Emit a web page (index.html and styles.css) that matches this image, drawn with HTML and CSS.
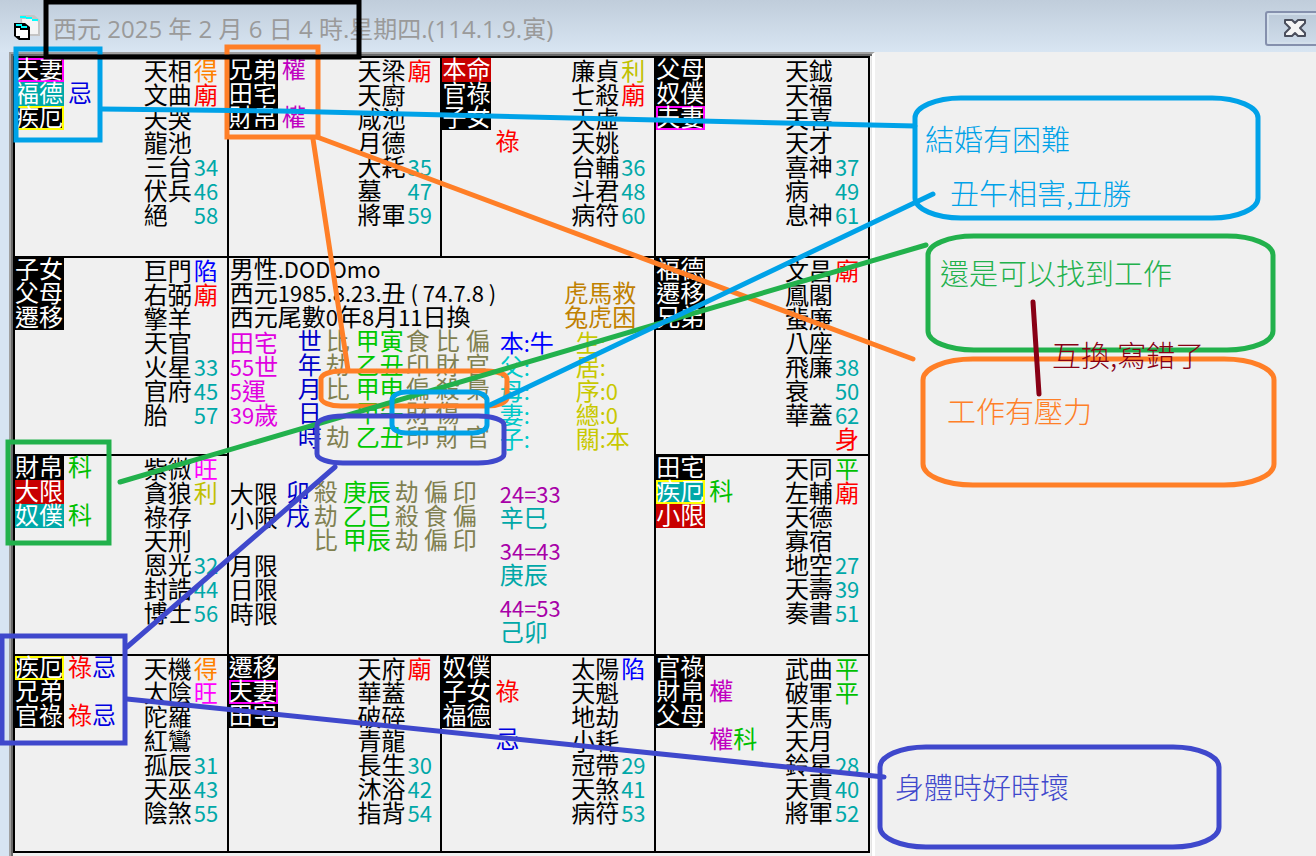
FILE: index.html
```
<!DOCTYPE html>
<html lang="zh-Hant">
<head>
    <meta charset="UTF-8">
    <meta name="viewport" content="width=device-width, initial-scale=1.0">
    <title>紫微斗數命盤</title>
    <link rel="stylesheet" href="styles.css">
</head>
<body>
    <header class="titlebar">
        <svg class="app-icon" width="28" height="28" viewBox="0 0 28 28">
            <path d="M6 0h14l6 5v16H8z" fill="#c4c4c4"/>
            <path d="M8 4h14l2 3v12H9z" fill="#f4f4f4"/>
            <path d="M6 2h6M12 3h6M18 5h6" stroke="#00ffff" stroke-width="2"/>
            <path d="M0 8h11l5 4v13H5l-5-4z" fill="#000"/>
            <path d="M2 13h4v2h8v8H6v-2H2z" fill="#fff"/>
            <path d="M2 10h6M7 12h6" stroke="#00ffff" stroke-width="2"/>
        </svg>
        <h1>西元 2025 年 2 月 6 日 4 時.星期四.(114.1.9.寅)</h1>
        <button class="close" type="button" aria-label="關閉">
            <svg width="22" height="18" viewBox="0 0 22 18">
                <path d="M1 1h7l3 3 3-3h7v3l-5 5 5 5v3h-7l-3-3-3 3H1v-3l5-5-5-5z" fill="#f4f4f4" stroke="#4a4e5c" stroke-width="2" stroke-linejoin="round"/>
            </svg>
        </button>
    </header>

    <main class="client">
        <div class="panel">
            <div class="chart" id="chart">
                <section class="center">
                    <div class="head">
                        <p class="person">男性<span>.DODOmo</span><br>西元<span>1985.8.23.</span>丑<span> ( 74.7.8 )</span><br>西元尾數<span>0</span>年<span>8</span>月<span>11</span>日換</p>
                        <p class="omen">虎馬救<br>兔虎困</p>
                    </div>
                    <div class="natal">
                        <p class="age">田宅<br><span>55</span>世<br><span>5</span>運<br><span>39</span>歲</p>
                        <table class="pillars">
                            <tr><th>世</th><td>比</td><td class="stem">甲寅</td><td>食</td><td>比</td><td>偏</td></tr>
                            <tr><th>年</th><td>劫</td><td class="stem">乙丑</td><td>印</td><td>財</td><td>官</td></tr>
                            <tr><th>月</th><td>比</td><td class="stem">甲申</td><td>偏</td><td>殺</td><td>梟</td></tr>
                            <tr><th>日</th><td></td><td class="stem">甲午</td><td>財</td><td>傷</td><td></td></tr>
                            <tr><th>時</th><td>劫</td><td class="stem">乙丑</td><td>印</td><td>財</td><td>官</td></tr>
                        </table>
                        <p class="kin"><b>本<span>:</span>牛</b><br>父<span>:</span><br>母<span>:</span><br>妻<span>:</span><br>子<span>:</span></p>
                        <p class="order">生<span>:</span><br>居<span>:</span><br>序<span>:0</span><br>總<span>:0</span><br>關<span>:</span>本</p>
                    </div>
                    <div class="limits">
                        <p class="limit-names">大限<br>小限<br><br>月限<br>日限<br>時限</p>
                        <table class="pillars">
                            <tr><th>卯</th><td>殺</td><td class="stem">庚辰</td><td>劫</td><td>偏</td><td>印</td></tr>
                            <tr><th>戌</th><td>劫</td><td class="stem">乙巳</td><td>殺</td><td>食</td><td>偏</td></tr>
                            <tr><th></th><td>比</td><td class="stem">甲辰</td><td>劫</td><td>偏</td><td>印</td></tr>
                        </table>
                        <div class="decades">
                            <p><span>24=33</span><br>辛巳</p>
                            <p><span>34=43</span><br>庚辰</p>
                            <p><span>44=53</span><br>己卯</p>
                        </div>
                    </div>
                </section>
            </div>
        </div>
    </main>

    <!-- hand-drawn remarks on top of the chart -->
    <svg class="marks-layer" width="1316" height="856" fill="none" stroke-width="5" stroke-linecap="round">
        <g stroke="#ff7f27">
            <path d="M313 139L348 370M317 137L913 359"/>
            <rect x="227" y="47" width="91" height="90"/>
            <rect x="321" y="371" width="186" height="35" rx="20" ry="8"/>
            <rect x="923" y="359" width="351" height="126" rx="50" ry="21"/>
        </g>
        <g stroke="#22b14c">
            <path d="M120 482L926 245"/>
            <rect x="8" y="442" width="101" height="101"/>
            <rect x="928" y="236" width="345" height="114" rx="46" ry="19"/>
        </g>
        <g stroke="#00a2e8">
            <path d="M101 109L280 111L915 126M490 405L933 194"/>
            <rect x="16" y="49" width="84" height="91"/>
            <rect x="392" y="392" width="95" height="41" rx="14" ry="8"/>
            <rect x="915" y="98" width="343" height="120" rx="46" ry="20"/>
        </g>
        <g stroke="#3f48cc">
            <path d="M127 647L335 467M127 699L884 777"/>
            <rect x="2" y="636" width="123" height="107"/>
            <rect x="317" y="416" width="187" height="47" rx="26" ry="9"/>
            <rect x="880" y="747" width="339" height="100" rx="46" ry="20"/>
        </g>
        <path d="M1033 302L1039 394" stroke="#880015"/>
        <rect x="46" y="2" width="313" height="55" stroke="#000"/>
    </svg>
    <p class="note marriage">結婚有困難</p>
    <p class="note clash">丑午相害,丑勝</p>
    <p class="note job">還是可以找到工作</p>
    <p class="note swap">互換,寫錯了</p>
    <p class="note stress">工作有壓力</p>
    <p class="note health">身體時好時壞</p>

    <script>
        // roles: name[:style], marks: one entry per line, stars: name[/status]
        const palaces = [
            { area: "a1", roles: "夫妻:spouse 福德:teal 疾厄:illness", marks: ["", "忌"], stars: "天相/得 文曲/廟 天哭 龍池 三台/34 伏兵/46 絕/58" },
            { area: "a2", roles: "兄弟 田宅 財帛", marks: ["權", "", "權"], stars: "天梁/廟 天廚 咸池 月德 大耗/35 墓/47 將軍/59" },
            { area: "a3", roles: "本命:red 官祿 子女", marks: ["", "", "", "祿"], stars: "廉貞/利 七殺/廟 天虛 天姚 台輔/36 斗君/48 病符/60" },
            { area: "a4", roles: "父母 奴僕 夫妻:spouse", marks: [], stars: "天鉞 天福 天喜 天才 喜神/37 病/49 息神/61" },
            { area: "b1", roles: "子女 父母 遷移", marks: [], stars: "巨門/陷 右弼/廟 擎羊 天官 火星/33 官府/45 胎/57" },
            { area: "b4", roles: "福德 遷移 兄弟", marks: [], stars: "文昌/廟 鳳閣 蜚廉 八座 飛廉/38 衰/50 華蓋/62 /身" },
            { area: "c1", roles: "財帛 大限:red 奴僕:teal", marks: ["科", "", "科"], stars: "紫微/旺 貪狼/利 祿存 天刑 恩光/32 封誥/44 博士/56" },
            { area: "c4", roles: "田宅 疾厄:illness,teal 小限:red", marks: ["", "科"], stars: "天同/平 左輔/廟 天德 寡宿 地空/27 天壽/39 奏書/51" },
            { area: "d1", roles: "疾厄:illness 兄弟 官祿", marks: ["祿忌", "", "祿忌"], stars: "天機/得 太陰/旺 陀羅 紅鸞 孤辰/31 天巫/43 陰煞/55" },
            { area: "d2", roles: "遷移 夫妻:spouse 田宅", marks: [], stars: "天府/廟 華蓋 破碎 青龍 長生/30 沐浴/42 指背/54" },
            { area: "d3", roles: "奴僕 子女 福德", marks: ["", "祿", "", "忌"], stars: "太陽/陷 天魁 地劫 小耗 冠帶/29 天煞/41 病符/53" },
            { area: "d4", roles: "官祿 財帛 父母", marks: ["", "權", "", "權科"], stars: "武曲/平 破軍/平 天馬 天月 鈴星/28 天貴/40 將軍/52" }
        ];

        const colors = {
            "得": "orange", "廟": "bright-red", "利": "olive", "陷": "blue", "旺": "magenta", "平": "green", "身": "bright-red",
            "忌": "navy", "權": "purple", "祿": "bright-red", "科": "green"
        };

        const chart = document.getElementById("chart");

        palaces.forEach(function(p) {
            const roles = p.roles.split(" ").map(function(r) {
                const [name, style] = r.split(":");
                return `<li class="${(style || "plain").replace(",", " ")}">${name}</li>`;
            }).join("");

            const marks = p.marks.map(function(line) {
                return "<li>" + [...line].map(c => `<span class="${colors[c]}">${c}</span>`).join("") + "</li>";
            }).join("");

            const stars = p.stars.split(" ").map(function(s) {
                const [name, status] = s.split("/");
                return `<tr><td>${name}</td><td class="${colors[status] || "num"}">${status || ""}</td></tr>`;
            }).join("");

            const cell = document.createElement("section");
            cell.className = "palace " + p.area;
            cell.innerHTML = `<ul class="roles">${roles}</ul><ul class="marks">${marks}</ul><table class="stars">${stars}</table>`;
            chart.appendChild(cell);
        });
    </script>
</body>
</html>
```
FILE: styles.css
```
* {
    box-sizing: border-box;
}

body {
    margin: 0;
    position: relative;
    overflow-x: hidden;
    background-color: #d7e4f2;
    color: #000;
    font-family: "Noto Sans CJK TC", "Liberation Sans", sans-serif;
    font-size: 24px;
    line-height: 24px;
}

h1, p, ul {
    margin: 0;
    padding: 0;
    list-style: none;
    font-weight: normal;
}

table {
    border-collapse: collapse;
}

td, th {
    padding: 0;
    height: 24px;
    font-weight: normal;
    text-align: left;
}

/* title bar */
.titlebar {
    display: flex;
    align-items: flex-start;
    height: 52px;
    padding: 11px 0 0 14px;
    background: linear-gradient(#c0cddb, #d8e5f2);
}

.app-icon {
    margin-top: 4px;
}

.titlebar h1 {
    flex: 1;
    margin-left: 11px;
    line-height: 36px;
    color: #9a9a9a;
    font-family: "Open Sans", "Noto Sans CJK TC", sans-serif;
    font-size: 24px;
    white-space: nowrap;
}

.close {
    width: 60px;
    height: 35px;
    margin: 0 -9px 0 0;
    padding: 2px 0 0 0;
    background: linear-gradient(#bccad9, #cfdcea);
    border: 2px solid #8590ad;
    border-radius: 3px;
    box-shadow: inset 0 0 0 2px #d3dfeb;
}

/* window body */
.client {
    display: grid;
    grid-template-columns: 53fr 27fr;
    margin-left: 9px;
    background-color: #f0f0f0;
}

.panel {
    padding: 2px 2px 3px 2px;
    border-style: solid;
    border-width: 2px 3px 0 2px;
    border-color: #a0a0a0 #fff #fff #a0a0a0;
    box-shadow: inset 2px 2px #696969, inset -1px 0 #e3e3e3;
    background-color: #f0f0f0;
}

.chart {
    display: grid;
    grid-template-columns: repeat(4, 1fr);
    grid-template-rows: minmax(198px, auto) minmax(196px, auto) minmax(198px, auto) minmax(195px, auto);
    grid-template-areas:
        "a1 a2 a3 a4"
        "b1 mid mid b4"
        "c1 mid mid c4"
        "d1 d2 d3 d4";
    gap: 2px;
    padding: 2px;
    background-color: #000;
}

.palace {
    display: flex;
    align-items: flex-start;
    padding-right: 8px;
    background-color: #f0f0f0;
}

.a1 { grid-area: a1; }
.a2 { grid-area: a2; }
.a3 { grid-area: a3; }
.a4 { grid-area: a4; }
.b1 { grid-area: b1; }
.b4 { grid-area: b4; }
.c1 { grid-area: c1; }
.c4 { grid-area: c4; }
.d1 { grid-area: d1; }
.d2 { grid-area: d2; }
.d3 { grid-area: d3; }
.d4 { grid-area: d4; }

.roles li {
    width: 49px;
    height: 24px;
    line-height: 20px;
    color: #fff;
    background-color: #000;
}

.roles .red {
    background-color: #c80000;
}

.roles .teal {
    background-color: #00a8a8;
}

.roles .spouse {
    box-shadow: inset 0 0 0 2px #ff00ff;
}

.roles .illness {
    box-shadow: inset 0 0 0 2px #ffff00;
}

.marks {
    margin-left: 4px;
    white-space: nowrap;
}

.marks li {
    height: 24px;
    line-height: 20px;
}

.stars {
    margin-left: auto;
}

.stars td:first-child {
    width: 50px;
}

.stars td:last-child {
    width: 25px;
}

.stars .num {
    font-size: 22px;
    color: #00a8a8;
}

.orange { color: #ff8000; }
.bright-red { color: #ff0000; }
.olive { color: #c0c000; }
.blue { color: #0000ff; }
.navy { color: #0000e0; }
.magenta { color: #ff00ff; }
.purple { color: #c000c0; }
.green { color: #00c000; }

/* middle of the chart */
.center {
    grid-area: mid;
    padding-left: 1px;
    background-color: #f0f0f0;
}

.center span {
    font-size: 22px;
    line-height: 20px;
    white-space: pre;
}

.head {
    display: flex;
    justify-content: space-between;
    align-items: flex-end;
    height: 72px;
    padding: 0 18px 2px 0;
    white-space: nowrap;
}

.omen {
    color: #c08000;
}

.natal, .limits {
    display: flex;
    align-items: flex-start;
}

.age {
    width: 68px;
    color: #e000e0;
}

.pillars {
    table-layout: fixed;
    line-height: 20px;
    color: #808050;
}

.pillars th {
    width: 28px;
    color: #0000c8;
}

.pillars td, .pillars th {
    vertical-align: top;
}

.natal .pillars {
    width: 198px;
    margin-right: 4px;
}

.natal td {
    width: 30px;
}

.natal .stem {
    width: 50px;
}

.pillars .stem {
    color: #00c800;
}

.kin {
    width: 76px;
    color: #00c8c8;
}

.kin b {
    color: #0000ff;
    font-weight: normal;
}

.order {
    color: #c8c800;
}

.limits {
    margin-top: 31px;
}

.limit-names {
    width: 56px;
}

.limits .pillars {
    width: 196px;
    margin-right: 18px;
}

.limits td {
    width: 29px;
}

.limits .stem {
    width: 52px;
}

.decades {
    display: grid;
    gap: 9px;
    color: #00a8a8;
}

.decades span {
    color: #a800a8;
}

/* remarks drawn over the window */
.marks-layer {
    position: absolute;
    top: 0;
    left: 0;
}

.note {
    position: absolute;
    font-size: 29px;
    line-height: 32px;
    font-weight: 300;
    white-space: nowrap;
}

.marriage {
    left: 925px;
    top: 122px;
    color: #00a2e8;
}

.clash {
    left: 950px;
    top: 176px;
    color: #00a2e8;
}

.job {
    left: 940px;
    top: 256px;
    color: #22b14c;
}

.swap {
    left: 1052px;
    top: 338px;
    color: #880015;
}

.stress {
    left: 947px;
    top: 394px;
    color: #ff7f27;
}

.health {
    left: 895px;
    top: 770px;
    color: #3f48cc;
}
```
